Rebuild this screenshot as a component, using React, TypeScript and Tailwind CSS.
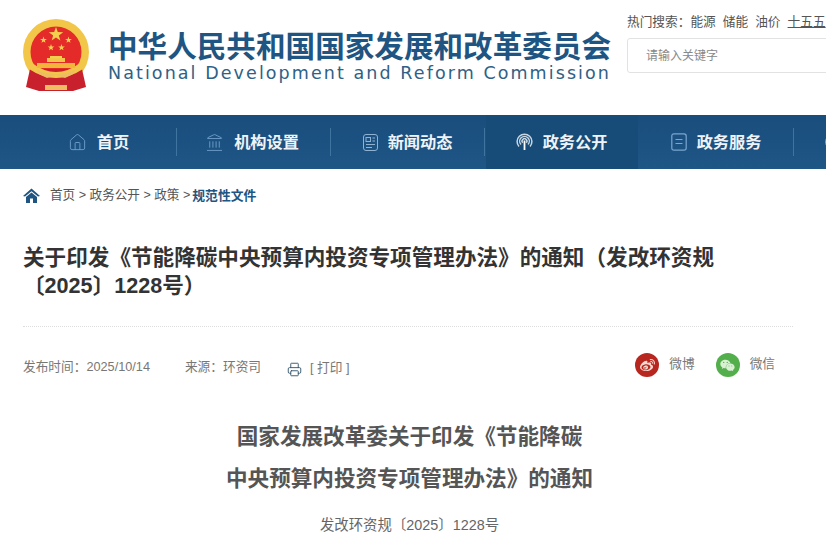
import { Home, Landmark, Printer, Globe } from "lucide-react"
import { FaWeibo, FaWeixin } from "react-icons/fa"

const cjk = "font-['Liberation_Sans','Noto_Sans_CJK_SC',sans-serif]"

function Emblem() {
  const star = "M0 -5 L1.2 -1.6 L4.8 -1.5 L1.9 0.6 L2.9 4 L0 2 L-2.9 4 L-1.9 0.6 L-4.8 -1.5 L-1.2 -1.6 Z"
  return (
    <svg width="66" height="72" viewBox="0 0 66 72" className="shrink-0 blur-[0.5px]">
      <circle cx="33" cy="33" r="33" fill="#f2c649" />
      <circle cx="33" cy="33" r="25.5" fill="#e52a2a" />
      <path d="M7 50 L3 68 L16 72 H50 L63 68 L59 50 Z" fill="#c8202c" />
      <path d="M9 44 Q33 62 57 44 L60 50 Q33 68 6 50 Z" fill="#f2c649" />
      <path d="M24 43 V39 H42 V43 Z" fill="#f2c649" />
      <rect x="27" y="37" width="12" height="2.5" fill="#f4d04f" />
      <rect x="14" y="44" width="38" height="5" fill="#f4b63a" />
      <path d="M14 51 Q33 60 52 51 L50 55 L42 59 L33 56 L24 59 L16 55 Z" fill="#eebc62" />
      <rect x="22" y="66" width="22" height="5" fill="#eebc62" />
      <g fill="#f4d04f">
        <path d={star} transform="translate(33 15.5) scale(1.5)" />
        <path d={star} transform="translate(20.5 21) scale(0.7)" />
        <path d={star} transform="translate(45.5 21) scale(0.7)" />
        <path d={star} transform="translate(28 28.5) scale(0.7)" />
        <path d={star} transform="translate(38.5 28.5) scale(0.7)" />
      </g>
    </svg>
  )
}

function SignalIcon() {
  return (
    <svg width="17" height="18" viewBox="0 0 17 18" fill="none" stroke="#c8d6e2" strokeWidth="1.5">
      <path d="M3 13.5 A7.4 7.4 0 1 1 14 13.5" />
      <path d="M5 11.5 A4.8 4.8 0 1 1 12 11.5" />
      <path d="M6.8 9.8 A2.4 2.4 0 1 1 10.2 9.8" />
      <path d="M8.5 7.5 V17" stroke="#fff" strokeWidth="1.8" />
    </svg>
  )
}

function NewsIcon() {
  return (
    <svg width="15" height="17" viewBox="0 0 15 17" fill="none" stroke="#8fb2d2" strokeWidth="1">
      <rect x="0.5" y="0.5" width="14" height="16" rx="2.5" />
      <rect x="3" y="3.5" width="4.5" height="4" />
      <path d="M9.5 4 H12 M9.5 7 H12 M3 10.5 H12 M3 13.5 H9" />
    </svg>
  )
}

function ServiceIcon() {
  return (
    <svg width="16" height="18" viewBox="0 0 16 18" fill="none" stroke="#7aa6d0" strokeWidth="1.2">
      <path d="M3 0.8 H13 Q15.2 0.8 15.2 3 V15 Q15.2 17.2 13 17.2 H3 Q0.8 17.2 0.8 15 V3 Q0.8 0.8 3 0.8 Z" />
      <path d="M4.5 6.5 H11.5 M4.5 10.5 H11.5" />
    </svg>
  )
}

const navItems = [
  { label: "首页", icon: <Home size={19} strokeWidth={1.2} className="text-[#6f9cc6]" />, cls: "w-[154px]", inner: "pr-[2px]" },
  { label: "机构设置", icon: <Landmark size={19} strokeWidth={1.2} className="text-[#6f9cc6]" />, cls: "w-[154px]", inner: "pr-[3px]" },
  { label: "新闻动态", icon: <NewsIcon />, cls: "w-[154px]", inner: "" },
  { label: "政务公开", icon: <SignalIcon />, cls: "w-[152px] mx-px bg-[#174b78]", inner: "", active: true },
  { label: "政务服务", icon: <ServiceIcon />, cls: "w-[155px]", inner: "" },
]

export default function App() {
  return (
    <div lang="zh-CN" className={`w-[826px] h-[546px] overflow-hidden bg-white ${cjk}`}>
      {/* Header */}
      <header className="h-[115px] flex pl-[23px] pt-[19px]">
        <Emblem />
        <div className="w-[503px] ml-[19px] pt-[12px] shrink-0">
          <div className="text-[29.6px] leading-[32px] font-bold text-[#1f5582] whitespace-nowrap">
            中华人民共和国国家发展和改革委员会
          </div>
          <div className="font-['DejaVu_Sans',sans-serif] text-[17.5px] leading-[20px] tracking-[2.08px] text-[#2f6186] whitespace-nowrap">
            National Development and Reform Commission
          </div>
        </div>
        <div className="ml-[16px] -mt-[6px] w-[260px] shrink-0">
          <div className="text-[12.7px] leading-[18px] text-[#555] whitespace-nowrap flex gap-[7px]">
            <span>热门搜索：能源</span>
            <span>储能</span>
            <span>油价</span>
            <span className="underline">十五五</span>
          </div>
          <div className="mt-[7px] h-[35px] border border-[#e2e2e2] rounded-[3px] flex items-center pl-[18px] text-[12px] text-[#888]">
            请输入关键字
          </div>
        </div>
      </header>

      {/* Nav */}
      <nav className="h-[54px] pl-[23px] flex bg-gradient-to-b from-[#194d7c] to-[#1e5686]">
        {navItems.map((item) => (
          <div key={item.label} className={`shrink-0 flex items-center ${item.cls}`}>
            <div
              className={`w-full h-[28px] flex items-center justify-center gap-[10px] border-r ${item.inner} ${
                item.active ? "border-transparent" : "border-[#3f749f]"
              }`}
            >
              {item.icon}
              <span className="text-[16.2px] font-bold text-[#eef3f7] whitespace-nowrap">{item.label}</span>
            </div>
          </div>
        ))}
        <div className="pl-[30px] flex items-center">
          <Globe size={18} strokeWidth={1.3} className="text-[#7aa6d0]" />
        </div>
      </nav>

      {/* Article */}
      <main className="w-[770px] ml-[23px]">
        <div className="h-[53px] flex items-center text-[12.8px] text-[#555]">
          <svg width="17" height="15" viewBox="0 0 17 15" className="mr-[10px]">
            <path d="M8.5 0.5 L0 8 L2 8.6 L8.5 3.2 L15 8.6 L17 8 Z M3 9 L8.5 4.6 L14 9 V15 H10 V10.5 H7 V15 H3 Z" fill="#1f5582" />
          </svg>
          <span className="text-[12.6px]">首页 &gt; 政务公开 &gt; 政策 &gt; </span>
          <span className="ml-[2px] font-bold text-[#1f5582]">规范性文件</span>
        </div>

        <h1 className="mt-[22px] text-[21.6px] leading-[28px] font-bold text-[#333]">
          关于印发《节能降碳中央预算内投资专项管理办法》的通知（发改环资规〔2025〕1228号）
        </h1>

        <div className="mt-[26px] border-t border-dotted border-[#ddd]" />

        <div className="h-[82px] flex items-center text-[12.7px] text-[#777]">
          <span>发布时间：2025/10/14</span>
          <span className="ml-[35px]">来源：环资司</span>
          <Printer size={15} strokeWidth={1.5} className="ml-[26px] mr-[8px] mt-[3px] text-[#37596f]" />
          <span className="mt-[1px]">[ 打印 ]</span>
          <div className="ml-auto flex items-center pr-[18px] -mt-[6px]">
            <span className="w-[24px] h-[24px] rounded-full bg-[#b8271f] flex items-center justify-center mr-[10px]">
              <FaWeibo size={15} className="text-[#f7d9d2]" />
            </span>
            <span>微博</span>
            <span className="ml-[21px] w-[24px] h-[24px] rounded-full bg-[#53ae4c] flex items-center justify-center mr-[10px]">
              <FaWeixin size={15} className="text-[#d9f0d5]" />
            </span>
            <span>微信</span>
          </div>
        </div>

        <div className="mt-[7px] pl-[3px] text-center text-[21.6px] leading-[42px] font-bold text-[#555]">
          <p>国家发展改革委关于印发《节能降碳</p>
          <p>中央预算内投资专项管理办法》的通知</p>
        </div>

        <p className="mt-[15px] pl-[3px] text-center text-[14.4px] leading-[20px] text-[#666]">发改环资规〔2025〕1228号</p>
      </main>
    </div>
  )
}
